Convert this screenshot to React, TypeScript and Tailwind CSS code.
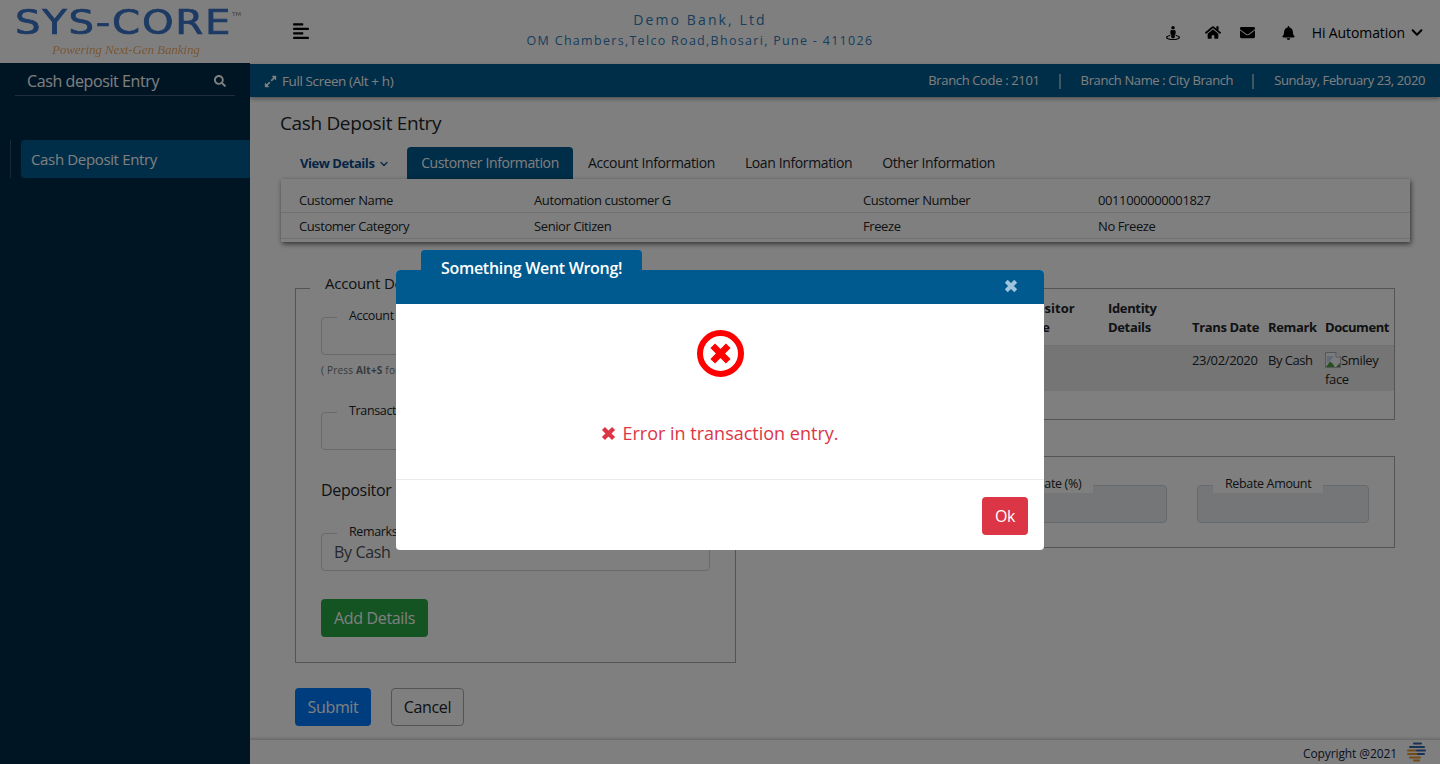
import React from "react";
import { FaAlignLeft, FaBell, FaChevronDown, FaEnvelope, FaExpandAlt, FaHome, FaSearch, FaStreetView } from "react-icons/fa";
import { LuChevronDown } from "react-icons/lu";

function XIcon({ className }: { className?: string }) {
  return (
    <svg viewBox="0 0 16 16" className={className} fill="none">
      <path d="M2.6 2.6L13.4 13.4M13.4 2.6L2.6 13.4" stroke="currentColor" strokeWidth="4.6" strokeLinecap="butt" />
    </svg>
  );
}

function FloatField({ label, value, className, disabled }: { label: string; value?: string; className?: string; disabled?: boolean }) {
  return (
    <div className={`relative ${className ?? ""}`}>
      <div className={`flex h-[38px] items-center rounded-[4px] border border-[#ced4da] px-3 text-[16px] text-[#495057] ${disabled ? "bg-[#e9ecef]" : "bg-white"}`}>{value}</div>
      <span className="absolute left-[16px] top-[-10px] bg-white px-3 text-[12.5px] leading-[18px] text-[#212529]">{label}</span>
    </div>
  );
}

function BrokenImage() {
  return (
    <svg width="16" height="16" viewBox="0 0 16 16" className="inline-block align-[-3px]">
      <path d="M0.5 0.5H11L15.5 5V15.5H0.5Z" fill="#f4f6f8" stroke="#a8acb2" />
      <path d="M11 0.5V5H15.5" fill="#fff" stroke="#a8acb2" />
      <path d="M1 15L5 9.5L8 12L9.5 15Z" fill="#4a9e3a" />
      <path d="M2 4H9L5 9L2 11Z" fill="#c4d4ee" />
      <path d="M11 15L15 11V15Z" fill="#4a9e3a" />
    </svg>
  );
}

export default function App() {
  return (
    <div className="relative h-[764px] w-[1440px] overflow-hidden bg-white font-['Open_Sans',sans-serif] tracking-[-0.35px] text-[#212529]">
      {/* top header */}
      <header className="flex h-[64px] items-center bg-white">
        <div className="-mt-[12px] flex w-[250px] flex-col pl-[15px] select-none">
          <div className="origin-left scale-x-[1.22] whitespace-nowrap font-['DejaVu_Sans',sans-serif] text-[33px] leading-[38px] tracking-[1.4px] text-[#3a74c8] blur-[0.3px] [-webkit-text-stroke:0.7px_#3a74c8]">
            SYS-CORE<span className="align-[18px] text-[5px] tracking-normal text-[#777] [-webkit-text-stroke:0px]">TM</span>
          </div>
          <div className="pl-[37px] font-['Liberation_Serif',serif] text-[13px] leading-[16px] italic tracking-[-0.1px] text-[#f0b070] blur-[0.2px]">Powering Next-Gen Banking</div>
        </div>
        <FaAlignLeft className="-mt-[3px] ml-[42px] h-[18px] w-[18px] text-black" />
        <div className="-mt-[3px] ml-[190px] w-[400px] text-center font-medium text-[#2f7cb8]">
          <div className="-translate-y-[1px] text-[14px] leading-[20px] tracking-[2.1px]">Demo Bank, Ltd</div>
          <div className="text-[12.5px] leading-[20px] tracking-[1.3px]">OM Chambers,Telco Road,Bhosari, Pune - 411026</div>
        </div>
        <div className="ml-auto flex items-center pr-[16px] pt-[1px] text-black">
          <FaStreetView className="h-[14px] w-[14px]" />
          <FaHome className="ml-[25px] h-[15px] w-[16px]" />
          <FaEnvelope className="ml-[19px] h-[15px] w-[15px]" />
          <FaBell className="ml-[27px] h-[14px] w-[13px]" />
          <span className="ml-[17px] text-[14px] font-medium tracking-[-0.1px]">Hi Automation</span>
          <FaChevronDown className="ml-[5px] h-[13px] w-[14px]" />
        </div>
      </header>

      <div className="flex h-[700px]">
        {/* sidebar */}
        <aside className="-mt-[1px] w-[250px] shrink-0 bg-[#002a48] text-white">
          <div className="mx-[15px] mt-[1px] flex h-[32px] items-center justify-between border-b border-white/25 pl-[12px] pr-[9px] pt-[2px] text-[16px] tracking-[-0.4px]">
            <span>Cash deposit Entry</span>
            <FaSearch className="h-[12px] w-[12px]" />
          </div>
          <div className="ml-[10px] mt-[44px] flex h-[38px] border-l border-white/20 pl-[10px]">
            <div className="flex flex-1 items-center rounded-l-[4px] bg-[#005a8f] pl-[10px] text-[15px]">Cash Deposit Entry</div>
          </div>
        </aside>

        {/* main */}
        <main className="flex min-w-0 flex-1 flex-col">
          <div className="z-10 flex h-[33px] shrink-0 items-center bg-[#005a8f] px-[15px] pt-[1px] text-[13px] text-white shadow-[0_2px_4px_rgba(0,0,0,0.35)]">
            <FaExpandAlt className="h-[13px] w-[13px] shrink-0 -translate-x-[1px]" />
            <span className="ml-[4px] text-[13.5px] tracking-[-0.4px]">Full Screen (Alt + h)</span>
            <span className="ml-auto">Branch Code : 2101</span>
            <span className="ml-[19px] mr-[20px] h-[15px] w-[2px] bg-white/50" />
            <span className="tracking-[-0.38px]">Branch Name : City Branch</span>
            <span className="ml-[19px] mr-[20px] h-[15px] w-[2px] bg-white/50" />
            <span className="tracking-[-0.39px]">Sunday, February 23, 2020</span>
          </div>

          <div className="flex-1 px-[30px]">
            <h1 className="mt-[13px] text-[19px] leading-[26px] font-medium">Cash Deposit Entry</h1>
            <div className="mt-[11px] flex h-[32px] items-stretch text-[14px] tracking-[-0.38px]">
              <div className="flex w-[127px] items-center pl-[20px] pt-[1px] text-[13px] font-bold tracking-[-0.45px] text-[#0b4a8a]">
                View Details <LuChevronDown className="ml-[4px] h-[12px] w-[12px]" strokeWidth={2.5} />
              </div>
              <div className="flex w-[166px] items-center justify-center rounded-t-[4px] bg-[#005a8f] pb-[1px] text-white">Customer Information</div>
              <div className="ml-[15px] flex items-center pb-[1px]">Account Information</div>
              <div className="ml-[30px] flex items-center pb-[1px]">Loan Information</div>
              <div className="ml-[30px] flex items-center pb-[1px]">Other Information</div>
            </div>

            <div className="relative ml-[1px] h-[63px] w-[1129px] bg-white pt-[8px] text-[13px] tracking-[-0.4px] shadow-[1px_2px_5px_rgba(0,0,0,0.6)]">
              {[
                ["Customer Name", "Automation customer G", "Customer Number", "0011000000001827"],
                ["Customer Category", "Senior Citizen", "Freeze", "No Freeze"],
              ].map((r) => (
                <div key={r[0]} className="grid h-[26px] grid-cols-[235px_329px_235px_1fr] items-center border-b border-[#dee2e6] pl-[18px] pt-[3px]">
                  {r.map((c) => <span key={c}>{c}</span>)}
                </div>
              ))}
            </div>

            <div className="ml-[15px] mt-[32px] flex w-[1100px] items-start">
              {/* left */}
              <div className="w-[441px] shrink-0">
                <fieldset className="h-[389px] border border-[#a9a9a9] px-[25px]">
                  <legend className="-ml-[11px] -translate-y-[1px] px-[15px] pb-[8px] text-[15px] leading-[20px] font-medium tracking-[-0.2px]">Account Details</legend>
                  <FloatField className="mt-[15px]" label="Account Number" />
                  <p className="mt-[9px] text-[10px] leading-[12px] tracking-[0.2px] text-[#6c757d]">( Press <b>Alt+S</b> for Account Search )</p>
                  <FloatField className="mt-[36px]" label="Transaction Type" />
                  <p className="mt-[29px] text-[16px] leading-[22px]">Depositor Details</p>
                  <FloatField className="mt-[32px]" label="Remarks" value="By Cash" />
                  <button className="mt-[28px] h-[38px] w-[107px] rounded-[4px] bg-[#28a745] text-[16px] text-white">Add Details</button>
                </fieldset>
                <div className="mt-[25px] flex gap-[20px]">
                  <button className="h-[38px] w-[76px] rounded-[4px] bg-[#007bff] text-[16px] text-white">Submit</button>
                  <button className="h-[38px] w-[73px] rounded-[4px] border border-[#a9a9a9] bg-white text-[16px]">Cancel</button>
                </div>
              </div>

              {/* right */}
              <div className="ml-[27px] w-[632px] shrink-0 pt-[14px]">
                <div className="h-[132px] border border-[#a9a9a9]">
                  <table className="w-full table-fixed border-collapse text-[13px]">
                    <thead>
                      <tr className="h-[56px] border-b border-[#dee2e6] align-bottom font-bold">
                        <th className="w-[101px] px-[6px] py-[8px] text-left leading-[19px]">Sr No</th>
                        <th className="w-[140px] px-[6px] py-[8px] text-left leading-[19px]">Amount</th>
                        <th className="w-[97px] px-[6px] py-[8px] text-left leading-[19px] tracking-[0px]">Depositor Name</th>
                        <th className="w-[84px] px-[6px] py-[8px] text-left leading-[19px]">Identity Details</th>
                        <th className="w-[76px] px-[6px] py-[8px] text-left leading-[19px] whitespace-nowrap">Trans Date</th>
                        <th className="w-[57px] px-[6px] py-[8px] text-left leading-[19px]">Remark</th>
                        <th className="px-[6px] py-[8px] text-left leading-[19px] tracking-[-0.45px]">Document</th>
                      </tr>
                    </thead>
                    <tbody>
                      <tr className="h-[46px] bg-[#ebebeb] align-top">
                        <td className="px-[6px] pt-[5px]">1</td>
                        <td className="px-[6px] pt-[5px]">1000</td>
                        <td className="px-[6px] pt-[5px]"></td>
                        <td className="px-[6px] pt-[5px]"></td>
                        <td className="px-[6px] pt-[5px] leading-[19px] whitespace-nowrap">23/02/2020</td>
                        <td className="px-[6px] pt-[5px] leading-[19px] whitespace-nowrap tracking-[-0.5px]">By Cash</td>
                        <td className="px-[6px] pt-[5px] leading-[19px]"><BrokenImage />Smiley face</td>
                      </tr>
                    </tbody>
                  </table>
                </div>
                <div className="mt-[36px] flex h-[92px] gap-[30px] border border-[#a9a9a9] pl-[29px] pt-[28px]">
                  <FloatField className="w-[172px]" label="Rebate Type" disabled />
                  <FloatField className="w-[172px]" label="Rebate (%)" disabled />
                  <FloatField className="w-[172px]" label="Rebate Amount" disabled />
                </div>
              </div>
            </div>
          </div>

          <footer className="flex h-[25px] shrink-0 items-center justify-end border-t border-[#d8d8d8] pr-[14px] text-[12px] font-medium tracking-[-0.1px] text-[#12263f] shadow-[0_-1px_2px_rgba(0,0,0,0.15)]">
            <span className="translate-y-[1.5px]">Copyright @2021</span>
            <svg width="19" height="20" viewBox="0 0 19 20" className="ml-[10px]">
              <path d="M7 1.5H14" stroke="#2f66ac" strokeWidth="2" strokeLinecap="round" />
              <path d="M3 5H8M9.5 5H17" stroke="#2f66ac" strokeWidth="2" strokeLinecap="round" />
              <path d="M1 8.5H9" stroke="#e8962e" strokeWidth="2" strokeLinecap="round" />
              <path d="M10 8.5H18" stroke="#2f66ac" strokeWidth="2" strokeLinecap="round" />
              <path d="M1 12H10" stroke="#e8962e" strokeWidth="2" strokeLinecap="round" />
              <path d="M11 12H17" stroke="#2f66ac" strokeWidth="2" strokeLinecap="round" />
              <path d="M3 15.5H13" stroke="#e8962e" strokeWidth="2" strokeLinecap="round" />
              <path d="M7 18.5H12" stroke="#e8962e" strokeWidth="2" strokeLinecap="round" />
            </svg>
          </footer>
        </main>
      </div>

      {/* backdrop */}
      <div className="absolute inset-0 z-20 bg-black/50" />

      {/* modal */}
      <div className="absolute left-[396px] top-[270px] z-30 flex h-[280px] w-[648px] flex-col rounded-[4px] bg-white">
        <div className="relative flex h-[34px] items-center justify-end rounded-t-[4px] bg-[#005a8f] pr-[26px]">
          <span className="absolute left-[25px] top-[-20px] flex h-[36px] w-[221px] items-center rounded-t-[4px] bg-[#005a8f] pb-[1px] pl-[20px] text-[16px] font-semibold tracking-[-0.3px] text-white">Something Went Wrong!</span>
          <XIcon className="-mt-[3px] h-[14px] w-[14px] text-[#9fc5dc]" />
        </div>
        <div className="flex h-[176px] flex-col items-center border-b border-[#e9ecef]">
          <div className="mt-[26px] flex h-[47px] w-[47px] items-center justify-center rounded-full border-[6px] border-[#ff0000]">
            <XIcon className="h-[23px] w-[23px] text-[#ff0000]" />
          </div>
          <div className="mt-[43px] flex items-center text-[18px] leading-[26px] font-medium tracking-[0px] text-[#dc3545]">
            <XIcon className="mr-[6px] h-[15px] w-[15px]" />
            Error in transaction entry.
          </div>
        </div>
        <div className="flex flex-1 items-start justify-end pr-[16px] pt-[17px]">
          <button className="h-[38px] w-[46px] rounded-[4px] bg-[#dc3545] text-[16px] text-white">Ok</button>
        </div>
      </div>
    </div>
  );
}
